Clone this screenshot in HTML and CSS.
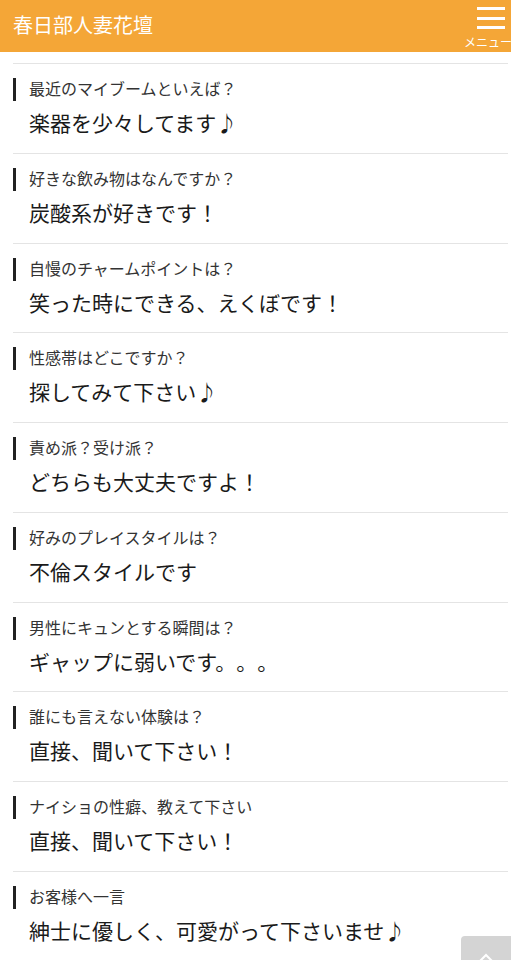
FILE: index.html
```html
<!DOCTYPE html>
<html lang="ja">
<head>
<meta charset="utf-8">
<title>春日部人妻花壇</title>
<link rel="stylesheet" href="styles.css">
</head>
<body>
<header class="header">
  <h1 class="title">春日部人妻花壇</h1>
  <div class="menu">
    <span class="bar"></span>
    <span class="bar"></span>
    <span class="bar"></span>
    <span class="menu-label">メニュー</span>
  </div>
</header>
<main class="qa">
  <div class="item"><p class="q">最近のマイブームといえば？</p><p class="a">楽器を少々してます♪</p></div>
  <div class="item"><p class="q">好きな飲み物はなんですか？</p><p class="a">炭酸系が好きです！</p></div>
  <div class="item"><p class="q">自慢のチャームポイントは？</p><p class="a">笑った時にできる、えくぼです！</p></div>
  <div class="item"><p class="q">性感帯はどこですか？</p><p class="a">探してみて下さい♪</p></div>
  <div class="item"><p class="q">責め派？受け派？</p><p class="a">どちらも大丈夫ですよ！</p></div>
  <div class="item"><p class="q">好みのプレイスタイルは？</p><p class="a">不倫スタイルです</p></div>
  <div class="item"><p class="q">男性にキュンとする瞬間は？</p><p class="a">ギャップに弱いです。。。</p></div>
  <div class="item"><p class="q">誰にも言えない体験は？</p><p class="a">直接、聞いて下さい！</p></div>
  <div class="item"><p class="q">ナイショの性癖、教えて下さい</p><p class="a">直接、聞いて下さい！</p></div>
  <div class="item"><p class="q">お客様へ一言</p><p class="a">紳士に優しく、可愛がって下さいませ♪</p></div>
</main>
<a class="totop" href="#"><svg width="16" height="10" viewBox="0 0 16 10"><path d="M2 9 L8 3 L14 9" fill="none" stroke="#fff" stroke-width="2"/></svg></a>
</body>
</html>
```
FILE: styles.css
```css
html, body {
  margin: 0;
  padding: 0;
  overflow-x: hidden;
  background: #fff;
}
body {
  font-family: "Noto Sans CJK JP", "Noto Sans", sans-serif;
  color: #222;
  text-spacing-trim: space-all;
}
.header {
  height: 52px;
  background: #f4a637;
  display: flex;
  align-items: flex-start;
  justify-content: space-between;
  overflow: hidden;
  position: relative;
}
.title {
  margin: 0;
  padding-left: 13px;
  font-size: 20px;
  font-weight: 400;
  line-height: 49px;
  color: #fff;
  white-space: nowrap;
}
.menu {
  width: 46px;
  flex: none;
  display: flex;
  flex-direction: column;
  align-items: flex-start;
  padding-top: 7px;
}
.bar {
  display: block;
  width: 28px;
  height: 3px;
  background: #fff;
  margin-left: 12px;
  margin-bottom: 6.5px;
}
.menu-label {
  font-size: 12px;
  line-height: 14px;
  color: #fff;
  white-space: nowrap;
  margin-top: -1px;
  margin-left: -1px;
}
.qa {
  margin: 11px 3px 0 13px;
}
.item {
  border-top: 1px solid #e4e4e4;
  padding: 14px 0 12.78px;
}
.q {
  margin: 0;
  height: 21px;
  padding-bottom: 2px;
  line-height: 21px;
  border-left: 3px solid #222;
  padding-left: 13px;
  font-size: 16px;
  color: #333;
}
.a {
  margin: 3px 0 0;
  padding-left: 16px;
  font-size: 21px;
  line-height: 36px;
  color: #1a1a1a;
}
.totop {
  position: fixed;
  left: 461px;
  top: 936px;
  width: 50px;
  height: 40px;
  background: #d4d4d4;
  border-radius: 4px 0 0 0;
  display: flex;
  justify-content: center;
  padding-top: 16px;
  box-sizing: border-box;
}
```
